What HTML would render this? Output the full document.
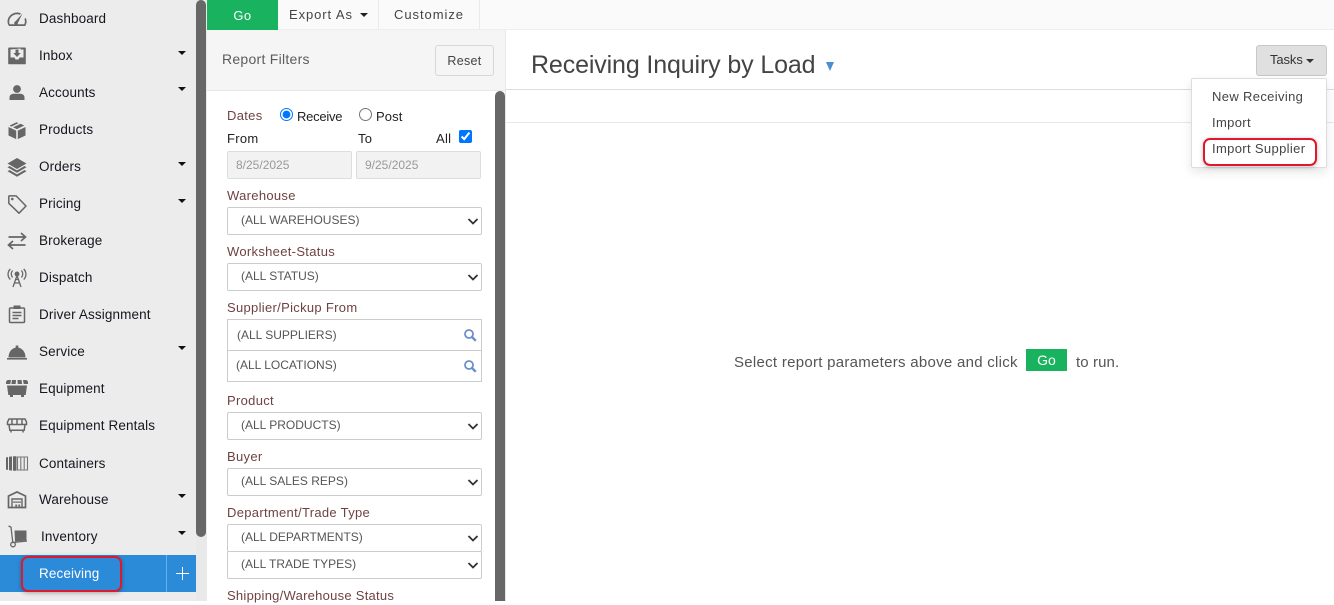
<!DOCTYPE html>
<html lang="en"><head><meta charset="utf-8"><title>Receiving Inquiry by Load</title>
<style>
*{box-sizing:border-box}
html,body{margin:0;padding:0;width:1334px;height:601px;overflow:hidden;background:#fff;font-family:"Liberation Sans",sans-serif}
.a{position:absolute}
.t{position:absolute;white-space:nowrap;line-height:18px;height:18px}
.n{font-size:13.5px;color:#16161f;letter-spacing:.12px;left:39px;margin-top:1px}
.c{position:absolute;left:178px;width:0;height:0;border-left:4.5px solid transparent;border-right:4.5px solid transparent;border-top:4.5px solid #111}
.l{font-size:13px;color:#6f4242;left:227px;letter-spacing:.31px;margin-top:1px}
.k{font-size:13px;color:#222;letter-spacing:.3px;margin-top:1px}
.m{font-size:13px;color:#444;letter-spacing:.35px;left:1212px;margin-top:1px}
select{position:absolute;left:227px;width:255px;height:28px;background:#fff;border:1px solid #ccc;border-radius:2px;font:12px "Liberation Sans",sans-serif;color:#555;padding:0 0 2px 13px;margin:0;outline:0;appearance:none;-webkit-appearance:none}
.i{position:absolute;background:#f2f2f2;border:1px solid #ddd;border-radius:2px;height:28px;top:151px;font-size:12px;color:#999;line-height:26px;padding-left:8px}
.s{position:absolute;left:227px;width:255px;background:#fff;border:1px solid #ccc;font-size:12px;color:#555;padding-left:9px}
</style></head><body>

<div class="a" style="left:0;top:0;width:196px;height:601px;background:#ececec"></div>
<div class="a" style="left:196px;top:0;width:11px;height:601px;background:#e9e9e9"></div>
<div class="a" style="left:196px;top:0;width:10px;height:537px;background:#676767;border-radius:5px"></div>

<div class="t n" style="top:9px">Dashboard</div>
<div class="t n" style="top:46px">Inbox</div><div class="c" style="top:51px"></div>
<div class="t n" style="top:83px">Accounts</div><div class="c" style="top:87px"></div>
<div class="t n" style="top:120px">Products</div>
<div class="t n" style="top:157px">Orders</div><div class="c" style="top:162px"></div>
<div class="t n" style="top:194px">Pricing</div><div class="c" style="top:199px"></div>
<div class="t n" style="top:231px">Brokerage</div>
<div class="t n" style="top:268px">Dispatch</div>
<div class="t n" style="top:305px">Driver Assignment</div>
<div class="t n" style="top:342px">Service</div><div class="c" style="top:346px"></div>
<div class="t n" style="top:379px">Equipment</div>
<div class="t n" style="top:416px">Equipment Rentals</div>
<div class="t n" style="top:454px">Containers</div>
<div class="t n" style="top:490px">Warehouse</div><div class="c" style="top:494px"></div>
<div class="t n" style="top:527px;left:41px">Inventory</div><div class="c" style="top:531px"></div>

<div class="a" style="left:0;top:555px;width:196px;height:37px;background:#2b8bd9"></div>
<div class="a" style="left:166px;top:555px;width:1px;height:37px;background:#6aaee6"></div>
<div class="a" style="left:21px;top:556px;width:101px;height:36px;border:2px solid #e0182d;border-radius:7px;box-shadow:0 1px 5px rgba(0,0,0,.3)"></div>
<div class="t n" style="top:564px;color:#fff">Receiving</div>
<div class="a" style="left:176px;top:573px;width:13px;height:1px;background:#fff"></div>
<div class="a" style="left:182px;top:567px;width:1px;height:13px;background:#fff"></div>

<svg class="a" style="left:0;top:0" width="40" height="601" viewBox="0 0 40 601">
<g fill="#666" stroke="none">
<!-- Dashboard -->
<path d="M9 26C8 24.500 7.500 23 7.500 21.500 7.500 16.500 12 12.500 17 12.500c1.500 0 2.700.3 4 1l-1.200 1.300C18.800 14.400 18 14.200 17 14.200c-4 0-7.800 3.300-7.800 7.300 0 .9.100 1.700.5 2.800h14.600c.4-1.100.6-1.900.6-2.800 0-.9-.2-1.800-.5-2.500l1.300-1.100c.6 1.100.9 2.300.9 3.600 0 1.500-.5 3-1.500 4.500z"/>
<path d="M15.300 21.500l7.200-8 -4.700 9.500a1.800 1.800 0 1 1-2.500-1.500z"/>
<!-- Inbox -->
<path fill-rule="evenodd" d="M9 47.500h16a.8.8 0 0 1 .8.800V63.500a.8.800 0 0 1-.8.800H9a.8.8 0 0 1-.8-.800V48.300a.8.800 0 0 1 .8-.800zM10.500 49.500v8h4l1 2h3l1-2h4v-8h-3v-1h0zM15.500 49.500v3.500h-2.200l3.700 4 3.700-4h-2.200v-3.500z"/>
<!-- Accounts -->
<circle cx="17" cy="89" r="3.900"/>
<path d="M9.500 100v-2.500c0-2.300 2-3.700 4-3.700h7c2 0 4 1.400 4 3.700v2.500z"/>
<!-- Products -->
<path d="M8.500 127l7.700 3.600v8.500l-7.700-3.600zM25.500 127l-7.700 3.600v8.500l7.700-3.600z"/>
<path d="M9.500 125.600l7-3.400 2 .9-7 3.500zM13 127.400l7.500-3.700 3.800 1.800-7.300 3.600z"/>
<!-- Orders -->
<path d="M17 158l9.500 5.500-9.500 5.500-9.500-5.500z"/>
<path d="M9.500 166l7.500 4.400 7.500-4.400 2 1.200-9.500 5.500-9.500-5.500z"/>
<path d="M9.500 170l7.500 4.400 7.500-4.400 2 1.200-9.500 5.500-9.500-5.500z"/>
</g>
<!-- Pricing -->
<path d="M8.800 196.500v6.800l10.200 9.900 7-7.200-9.900-10.100h-6.700a.6.600 0 0 0-.6.600z" fill="none" stroke="#666" stroke-width="1.500" stroke-linejoin="round"/>
<circle cx="12.300" cy="199" r="1.300" fill="#666"/>
<!-- Brokerage -->
<path d="M8.500 237H25M21 233l4.500 4-4.500 4M25.500 245H9M13 241l-4.500 4 4.500 4" fill="none" stroke="#666" stroke-width="1.700"/>
<!-- Dispatch -->
<g fill="none" stroke="#666" stroke-width="1.300">
<circle cx="17" cy="274" r="1.800" fill="#666"/>
<path d="M13 287l4-11.500 4 11.500M14.200 283h5.600M15 279.500h4"/>
<path d="M12.600 270.500c-1.800 2-1.800 5 0 7M21.400 270.500c1.800 2 1.800 5 0 7M10.300 269c-3 3-3 7.500 0 10.500M23.700 269c3 3 3 7.500 0 10.500"/>
</g>
<!-- Driver Assignment -->
<g fill="none" stroke="#666" stroke-width="1.500">
<rect x="9.500" y="308" width="15" height="14.500" rx="1"/>
<path d="M12.500 312.500h9M12.500 315.500h9M12.500 318.500h6"/>
</g>
<path d="M13.500 305.500h7v3.500h-7z" fill="#666"/>
<g fill="#666">
<!-- Service -->
<path d="M8.500 357.500c0-6 3.800-10 8.500-10s8.500 4 8.500 10z"/>
<rect x="15.700" y="345.500" width="2.600" height="3"/>
<rect x="7" y="358" width="20" height="1.600"/>
<!-- Equipment -->
<path d="M6 381.500l1.500-1.500h3.500l-.7 4H6zM12 380h4l-.300 4H11.400zM17.500 380h4l.6 4h-4.400zM23 380h3.500l1.500 1.500v2.500h-4.300z"/>
<path d="M7 385.500h20l-1.300 9.500h-1.700v2h-3v-2h-8v2h-3v-2H8.300z"/>
<!-- Containers -->
<path d="M6 457.500l2-.5v13l-2-.5zM9 456.800l3-.4v14.200l-3-.4zM13 456.200h3.500v14.600H13z"/>
</g>
<!-- Equipment Rentals -->
<g fill="none" stroke="#666" stroke-width="1.500">
<path d="M9 419h16l1.500 3v2.500h-19V422zM9 424.500l.8 5.700h14.400l.8-5.700M12 419.500v5M17 419.500v5M22 419.500v5M11 430.500v2M23 430.500v2"/>
<!-- Containers outline -->
<path d="M17.500 457h10v13h-10zM20.800 457v13M24.200 457v13" stroke="#777" stroke-width="1.100"/>
<!-- Warehouse -->
<path d="M8.500 496l8.500-4 8.500 4v11.500h-17z" stroke-width="1.700"/>
<path d="M12 507v-8h10v8" stroke-width="1.400"/>
</g>
<path d="M13 501.500h8v1.200h-8z" fill="#666"/>
<rect x="15.300" y="504.500" width="1.800" height="2" fill="#666"/><rect x="18.300" y="504.500" width="1.800" height="2" fill="#666"/>
<!-- Inventory -->
<path d="M8.500 526l2.500 1.200 1.800 15.300 14.200-1.500" fill="none" stroke="#666" stroke-width="1.300"/>
<circle cx="13" cy="544.500" r="2.300" fill="none" stroke="#666" stroke-width="1.300"/>
<path d="M14.500 530.500h12v10l-11.500 1z" fill="#666"/>
</svg>

<!-- Toolbar -->
<div class="a" style="left:207px;top:0;width:1127px;height:30px;background:#fafafa;border-bottom:1px solid #eee"></div>
<div class="a" style="left:207px;top:0;width:71px;height:30px;background:#19b35f;color:#fff;font-size:13px;line-height:31px;text-align:center;letter-spacing:.4px">Go</div>
<div class="t" style="left:289px;top:6px;font-size:13px;color:#444;letter-spacing:.92px">Export As</div>
<div class="a" style="left:360px;top:13px;width:0;height:0;border-left:4px solid transparent;border-right:4px solid transparent;border-top:4px solid #222"></div>
<div class="a" style="left:378px;top:0;width:1px;height:29px;background:#eaeaea"></div>
<div class="a" style="left:479px;top:0;width:1px;height:29px;background:#eaeaea"></div>
<div class="t" style="left:394px;top:6px;font-size:13px;color:#444;letter-spacing:.95px">Customize</div>

<!-- Filter panel -->
<div class="a" style="left:207px;top:30px;width:299px;height:61px;background:#f5f5f5;border-bottom:1px solid #e8e8e8;border-right:1px solid #e8e8e8"></div>
<div class="t" style="left:222px;top:50px;font-size:14px;color:#5c5c5c;letter-spacing:.27px">Report Filters</div>
<div class="a" style="left:435px;top:45px;width:59px;height:31px;background:#f5f5f5;border:1px solid #d8d8d8;border-radius:3px;font-size:12.5px;color:#444;text-align:center;line-height:30px;letter-spacing:.3px">Reset</div>
<div class="a" style="left:495px;top:91px;width:10px;height:510px;background:#676767;border-radius:5px 5px 0 0"></div>
<div class="a" style="left:505px;top:90px;width:1px;height:511px;background:#e4e4e4"></div>

<div class="t l" style="top:106px">Dates</div>
<input type="radio" name="d" checked class="a" style="left:280px;top:108px;width:13px;height:13px;margin:0">
<div class="t k" style="left:297px;top:107px;letter-spacing:-.25px">Receive</div>
<input type="radio" name="d" class="a" style="left:359px;top:108px;width:13px;height:13px;margin:0">
<div class="t k" style="left:376px;top:107px;letter-spacing:.1px">Post</div>
<div class="t k" style="left:227px;top:129px">From</div>
<div class="t k" style="left:358px;top:129px">To</div>
<div class="t k" style="left:436px;top:129px">All</div>
<input type="checkbox" checked class="a" style="left:459px;top:130px;width:13px;height:13px;margin:0">
<div class="i" style="left:227px;width:125px">8/25/2025</div>
<div class="i" style="left:356px;width:125px">9/25/2025</div>

<div class="t l" style="top:186px">Warehouse</div>
<select style="top:207px"><option>(ALL WAREHOUSES)</option></select>
<div class="t l" style="top:242px">Worksheet-Status</div>
<select style="top:263px"><option>(ALL STATUS)</option></select>
<div class="t l" style="top:298px">Supplier/Pickup From</div>
<div class="s" style="top:319px;height:32px;line-height:30px;border-bottom:1px solid #ccc">(ALL SUPPLIERS)</div>
<div class="s" style="top:351px;height:31px;line-height:28px;padding-left:8px;border-top:0">(ALL LOCATIONS)</div>
<svg class="a" style="left:463px;top:328px" width="14" height="46" viewBox="0 0 14 46" fill="none" stroke="#6b8fc9">
<circle cx="6" cy="6" r="4" stroke-width="1.800"/><path d="M9 9l3.800 3.800" stroke-width="2.400"/>
<circle cx="6" cy="37" r="4" stroke-width="1.800"/><path d="M9 40l3.800 3.800" stroke-width="2.400"/>
</svg>
<div class="t l" style="top:391px">Product</div>
<select style="top:412px"><option>(ALL PRODUCTS)</option></select>
<div class="t l" style="top:447px">Buyer</div>
<select style="top:468px"><option>(ALL SALES REPS)</option></select>
<div class="t l" style="top:503px">Department/Trade Type</div>
<select style="top:524px"><option>(ALL DEPARTMENTS)</option></select>
<select style="top:551px"><option>(ALL TRADE TYPES)</option></select>
<div class="t l" style="top:586px;letter-spacing:.26px">Shipping/Warehouse Status</div>
<svg class="a" style="left:227px;top:200px" width="255" height="390" viewBox="0 0 255 390" fill="none" stroke="#333" stroke-width="1.800">
<path d="M241.500 19l4.500 4.500 4.500-4.500M241.500 75l4.500 4.500 4.500-4.500M241.500 224l4.500 4.500 4.500-4.500M241.500 280l4.500 4.500 4.500-4.500M241.500 336l4.500 4.500 4.500-4.500M241.500 363l4.500 4.500 4.500-4.500"/>
</svg>

<!-- Main -->
<div class="t" style="left:531px;top:50px;font-size:25px;line-height:30px;height:30px;color:#444;letter-spacing:-.13px">Receiving Inquiry by Load</div>
<div class="a" style="left:826px;top:62px;width:0;height:0;border-left:4.500px solid transparent;border-right:4.500px solid transparent;border-top:9px solid #4a8fd0"></div>
<div class="a" style="left:506px;top:89px;width:828px;height:1px;background:#ddd"></div>
<div class="a" style="left:506px;top:122px;width:828px;height:1px;background:#e8e8e8"></div>

<div class="a" style="left:1256px;top:45px;width:71px;height:31px;background:#e0e0e0;border:1px solid #c8c8c8;border-radius:3px"></div>
<div class="t" style="left:1270px;top:51px;font-size:13px;color:#333;letter-spacing:-.1px">Tasks</div>
<div class="a" style="left:1306px;top:59px;width:0;height:0;border-left:4px solid transparent;border-right:4px solid transparent;border-top:4px solid #333"></div>

<div class="a" style="left:1191px;top:78px;width:136px;height:90px;background:#fff;border:1px solid #ddd;border-radius:2px;box-shadow:0 4px 10px rgba(0,0,0,.1)"></div>
<div class="t m" style="top:87px">New Receiving</div>
<div class="t m" style="top:113px">Import</div>
<div class="t m" style="top:139px">Import Supplier</div>
<div class="a" style="left:1203px;top:138px;width:114px;height:28px;border:2px solid #e0182d;border-radius:7px;box-shadow:0 1px 5px rgba(0,0,0,.25)"></div>

<div class="t" style="left:734px;top:354px;font-size:15px;color:#555;letter-spacing:.28px">Select report parameters above and click</div>
<div class="a" style="left:1026px;top:349px;width:41px;height:22px;background:#19b35f;color:#fff;font-size:14px;line-height:22px;text-align:center">Go</div>
<div class="t" style="left:1076px;top:354px;font-size:15px;color:#555;letter-spacing:.1px">to run.</div>
</body></html>
